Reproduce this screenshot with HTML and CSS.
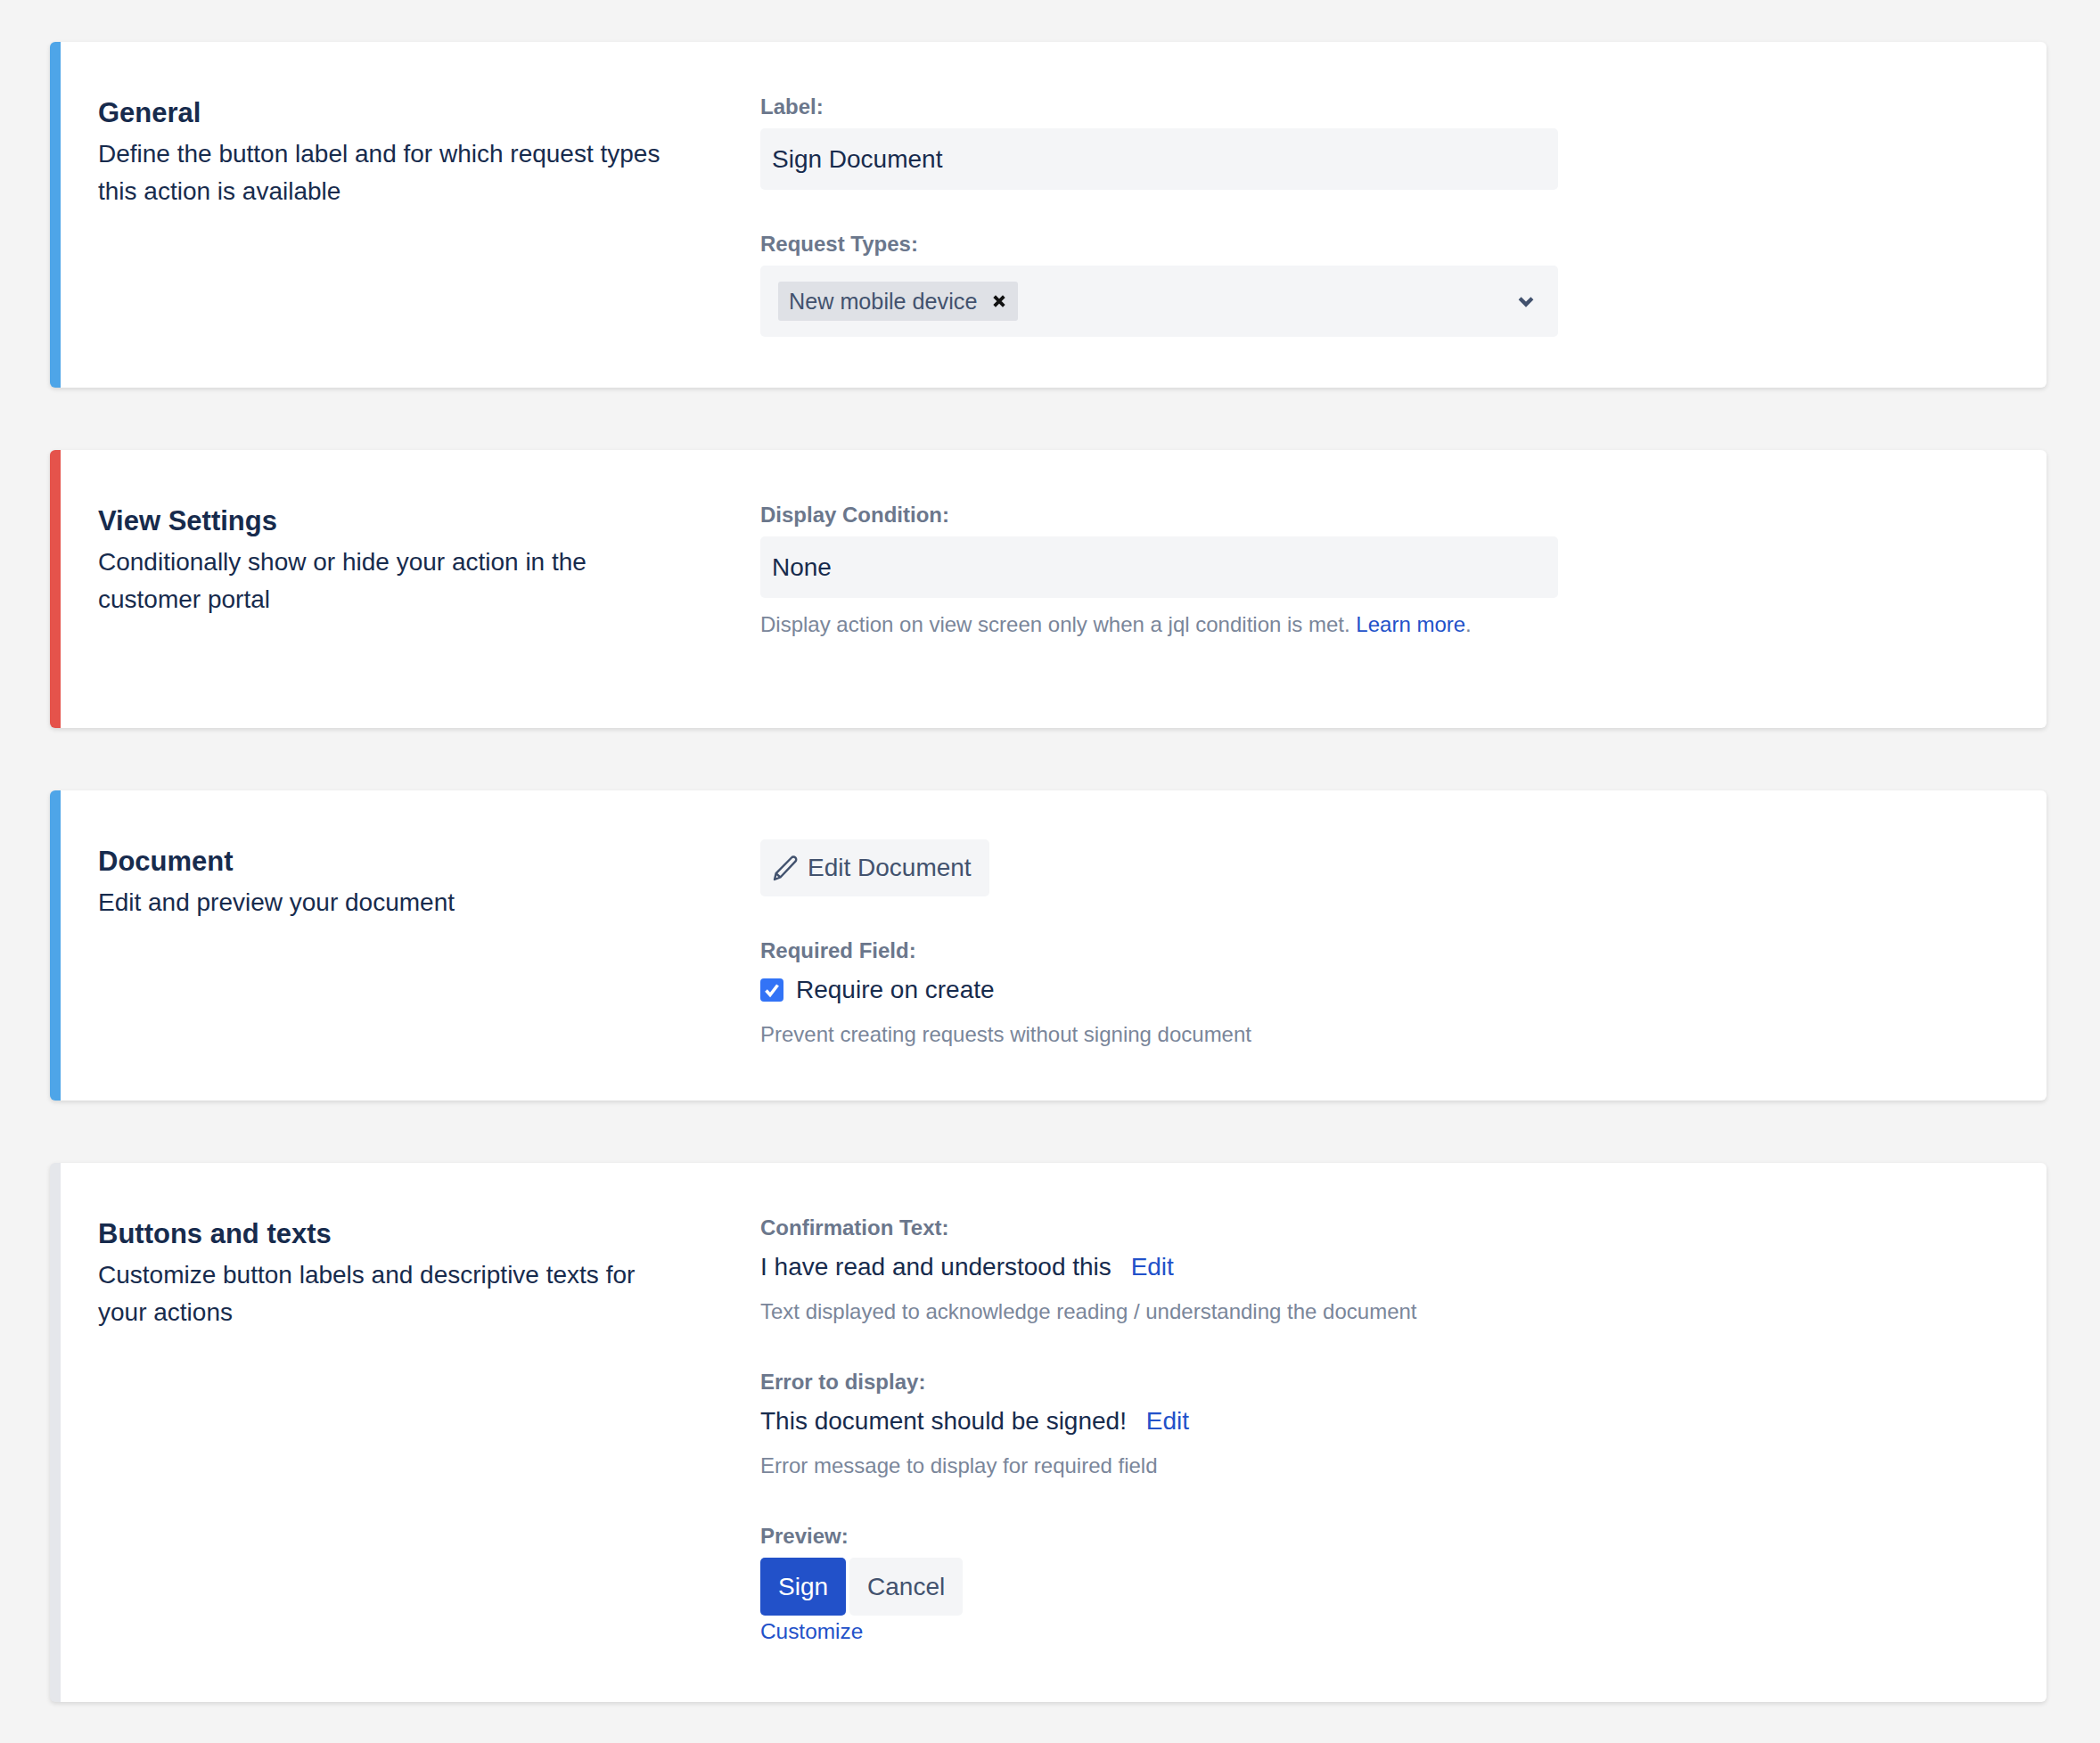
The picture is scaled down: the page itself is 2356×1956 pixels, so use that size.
FILE: index.html
```html
<!DOCTYPE html>
<html lang="en">
<head>
  <meta charset="UTF-8" />
  <meta name="viewport" content="width=device-width, initial-scale=1.0" />
  <title>Action Settings</title>
  <link rel="stylesheet" href="styles.css">
</head>
<body>
  <div class="page">

    <section class="card card-general">
      <div class="intro">
        <h2>General</h2>
        <p>Define the button label and for which request types this action is available</p>
      </div>
      <div class="fields">
        <div class="field">
          <div class="label">Label:</div>
          <div class="input">Sign Document</div>
        </div>
        <div class="field">
          <div class="label">Request Types:</div>
          <div class="select">
            <span class="tag">New mobile device
              <svg class="tag-x" viewBox="0 0 12 12"><path d="M2 2l8 8M10 2l-8 8" /></svg>
            </span>
            <svg class="chevron" viewBox="0 0 16 12"><path d="M2.5 3l5.5 5.5L13.5 3" /></svg>
          </div>
        </div>
      </div>
    </section>

    <section class="card card-view">
      <div class="intro">
        <h2>View Settings</h2>
        <p>Conditionally show or hide your action in the customer portal</p>
      </div>
      <div class="fields">
        <div class="field">
          <div class="label">Display Condition:</div>
          <div class="input">None</div>
          <div class="hint">Display action on view screen only when a jql condition is met. <a href="#">Learn more</a>.</div>
        </div>
      </div>
    </section>

    <section class="card card-document">
      <div class="intro">
        <h2>Document</h2>
        <p>Edit and preview your document</p>
      </div>
      <div class="fields">
        <div class="field">
          <button class="btn btn-edit">
            <svg class="pencil" viewBox="0 0 30 30"><path d="M22 3.5a3 3 0 0 1 4.4 4.2L9.5 25.5 3 28l1.6-6.8z M4.6 21.2l4.9 4.3" /></svg>
            Edit Document
          </button>
        </div>
        <div class="field">
          <div class="label">Required Field:</div>
          <label class="check">
            <span class="box"><svg viewBox="0 0 26 26"><path d="M6.5 13.5l4.5 5 8.5-11" /></svg></span>
            Require on create
          </label>
          <div class="hint">Prevent creating requests without signing document</div>
        </div>
      </div>
    </section>

    <section class="card card-texts">
      <div class="intro">
        <h2>Buttons and texts</h2>
        <p>Customize button labels and descriptive texts for your actions</p>
      </div>
      <div class="fields">
        <div class="field">
          <div class="label">Confirmation Text:</div>
          <div class="value">I have read and understood this <a href="#">Edit</a></div>
          <div class="hint">Text displayed to acknowledge reading / understanding the document</div>
        </div>
        <div class="field">
          <div class="label">Error to display:</div>
          <div class="value">This document should be signed! <a href="#">Edit</a></div>
          <div class="hint">Error message to display for required field</div>
        </div>
        <div class="field">
          <div class="label">Preview:</div>
          <div class="preview">
            <button class="btn btn-primary">Sign</button>
            <button class="btn">Cancel</button>
          </div>
          <a class="customize" href="#">Customize</a>
        </div>
      </div>
    </section>

  </div>
</body>
</html>
```

FILE: styles.css
```css
:root {
  --dark: #172b4d;
  --muted: #6b778c;
  --link: #2251c9;
  --field: #f4f5f7;
}

html, body {
  margin: 0;
  background: #f4f4f4;
}

body {
  font-family: "Liberation Sans", Arial, sans-serif;
  color: var(--dark);
}

.page {
  display: flex;
  flex-direction: column;
  gap: 70px;
  padding: 47px 60px 48px 56px;
}

.card {
  display: grid;
  grid-template-columns: 743px 895px;
  box-sizing: border-box;
  background: #fff;
  border-left: 12px solid #e5e7eb;
  border-radius: 6px;
  box-shadow: 0 2px 5px rgba(0, 0, 0, 0.12);
  padding: 55px 42px 0;
}

.card-general { height: 388px; border-left-color: #4ea5e8; }
.card-view { height: 312px; border-left-color: #e5534b; }
.card-document { height: 348px; border-left-color: #4ea5e8; }
.card-texts { height: 605px; }

.intro h2 {
  margin: 0;
  font-size: 31px;
  line-height: 50px;
  font-weight: bold;
}

.intro p {
  margin: 0;
  max-width: 660px;
  font-size: 28px;
  line-height: 42px;
}

.fields {
  display: flex;
  flex-direction: column;
  gap: 43px;
}

.label {
  font-size: 24px;
  line-height: 36px;
  font-weight: bold;
  color: var(--muted);
  margin-bottom: 6px;
}

.input {
  background: var(--field);
  border-radius: 5px;
  height: 69px;
  line-height: 69px;
  padding: 0 13px;
  font-size: 28px;
}

.select {
  display: flex;
  align-items: center;
  justify-content: space-between;
  background: var(--field);
  border-radius: 5px;
  height: 80px;
  padding: 0 26px 0 20px;
}

.tag {
  display: flex;
  align-items: center;
  gap: 17px;
  height: 44px;
  padding: 0 13px 0 12px;
  background: #dfe1e6;
  border-radius: 3px;
  font-size: 25.2px;
  color: #42526e;
}

.tag-x {
  width: 16px;
  height: 16px;
  fill: none;
  stroke: #111;
  stroke-width: 2.8;
}

.chevron {
  width: 20px;
  height: 15px;
  fill: none;
  stroke: #42526e;
  stroke-width: 3.4;
}

.hint {
  margin-top: 12px;
  font-size: 24px;
  line-height: 36px;
  color: #7a869a;
}

a {
  color: var(--link);
  text-decoration: none;
}

.btn {
  display: inline-flex;
  align-items: center;
  height: 65px;
  padding: 0 20px;
  border: none;
  border-radius: 5px;
  background: var(--field);
  color: #42526e;
  font-family: inherit;
  font-size: 28px;
}

.btn-edit {
  height: 64px;
  padding: 0 20px 0 13px;
  gap: 10px;
}

.btn-primary {
  background: var(--link);
  color: #fff;
}

.pencil {
  width: 30px;
  height: 30px;
  fill: none;
  stroke: #42526e;
  stroke-width: 2.4;
  stroke-linejoin: round;
}

.check {
  display: flex;
  align-items: center;
  gap: 14px;
  font-size: 28px;
  line-height: 40px;
}

.box {
  width: 26px;
  height: 26px;
  background: #3273f6;
  border-radius: 4px;
}

.box svg {
  display: block;
  fill: none;
  stroke: #fff;
  stroke-width: 3.6;
}

.value {
  font-size: 28px;
  line-height: 40px;
}

.value a {
  margin-left: 14px;
}

.preview {
  display: flex;
  gap: 4px;
}

.customize {
  display: block;
  font-size: 24.4px;
  line-height: 36px;
}
```
